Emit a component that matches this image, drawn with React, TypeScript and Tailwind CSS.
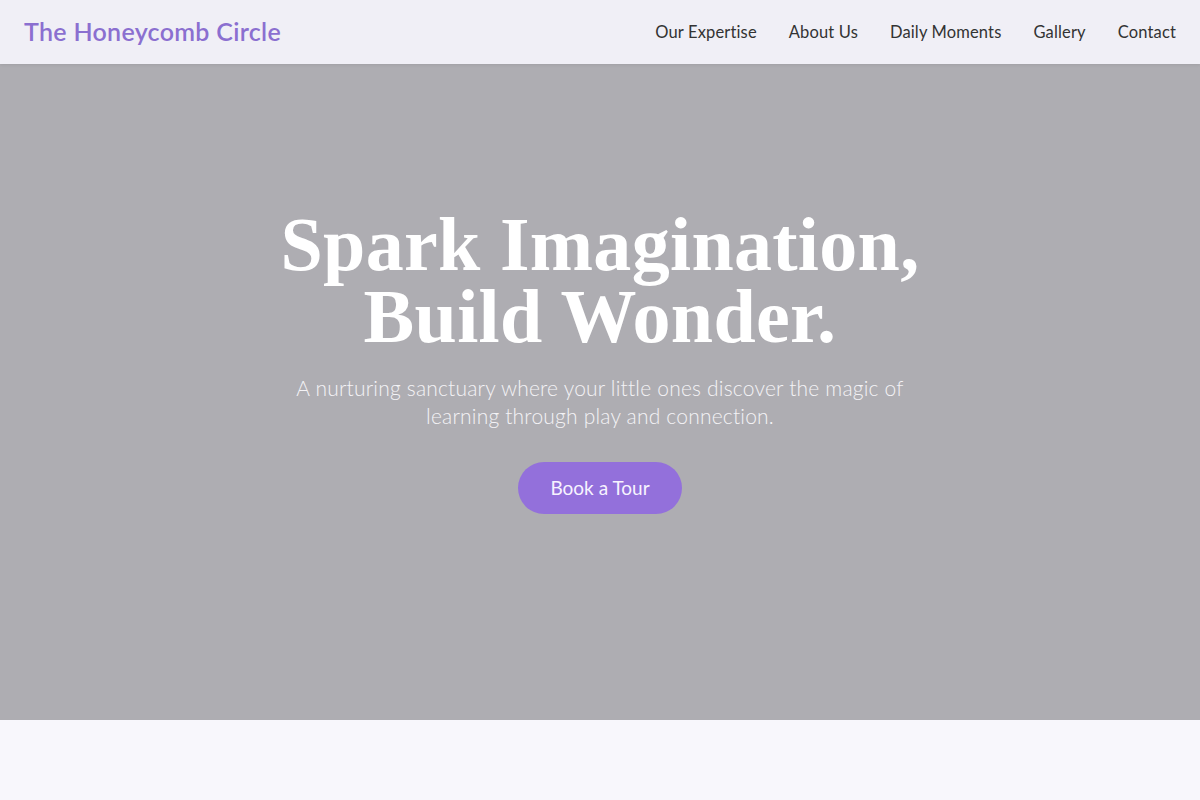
export default function App() {
  const nav = ["Our Expertise", "About Us", "Daily Moments", "Gallery", "Contact"];
  return (
    <div className="min-h-screen bg-[#f8f7fc]" style={{ fontFamily: "Lato, 'Noto Sans', sans-serif" }}>
      <header className="h-16 bg-[#f0eff6] flex items-center justify-between px-6 shadow-[0_1px_3px_rgba(0,0,0,0.08)] relative z-10">
        <div className="text-[25px] font-semibold text-[#8b6fd0] tracking-[0.3px]">The Honeycomb Circle</div>
        <nav className="flex gap-8 text-[16.5px] tracking-[0.15px] text-[#333333] pt-[1px]">
          {nav.map((n) => (
            <a key={n} className="cursor-pointer">{n}</a>
          ))}
        </nav>
      </header>
      <section className="h-[656px] bg-[#aeadb2] flex flex-col items-center pt-[144px] text-center">
        <h1
          className="text-[76px] leading-[72px] font-bold text-white tracking-[0.3px]"
          style={{ fontFamily: "'Liberation Serif', 'DejaVu Serif', serif" }}
        >
          Spark Imagination,
          <br />
          Build Wonder.
        </h1>
        <p className="mt-[22px] max-w-[660px] text-[21px] leading-[28px] font-light tracking-[0.2px] text-[#f4f3f6]">
          A nurturing sanctuary where your little ones discover the magic of learning through play and connection.
        </p>
        <button className="mt-[32px] h-[52px] px-8 rounded-full bg-[#9370db] text-[19px] text-[#f7f3ff]">
          Book a Tour
        </button>
      </section>
      <section className="h-20 bg-[#f8f7fc]" />
    </div>
  );
}
